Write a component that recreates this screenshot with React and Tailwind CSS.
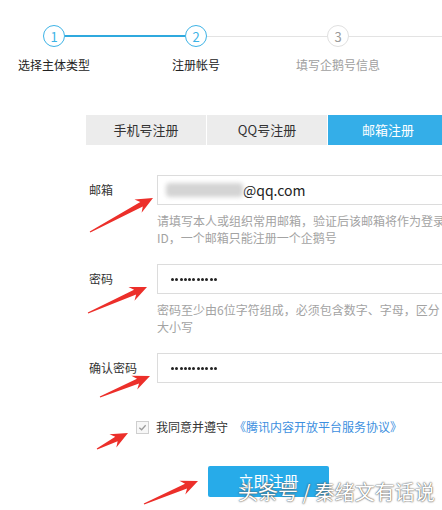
import React from "react";

const font = { fontFamily: '"Noto Sans CJK SC", "Noto Sans", sans-serif' };

const steps = [
  { n: 1, label: "选择主体类型", state: "done" },
  { n: 2, label: "注册帐号", state: "active" },
  { n: 3, label: "填写企鹅号信息", state: "todo" },
  { n: 4, label: "提交资料审核", state: "todo" },
];

// red arrows drawn over the screenshot
const arrows = [
  [90, 232, 153, 198],
  [88, 313, 147, 287],
  [100, 397, 150, 376],
  [97, 449, 128, 433],
  [144, 504, 198, 481],
];

function arrowPoints([x1, y1, x2, y2]) {
  const dx = x2 - x1;
  const dy = y2 - y1;
  const len = Math.hypot(dx, dy);
  const ux = dx / len;
  const uy = dy / len;
  const nx = -uy;
  const ny = ux;
  const head = 17;
  const bx = x2 - ux * head;
  const by = y2 - uy * head;
  const nk = x2 - ux * (head - 4);
  const nky = y2 - uy * (head - 4);
  const p = [
    [x1 + nx * 0.6, y1 + ny * 0.6],
    [nk + nx * 2.6, nky + ny * 2.6],
    [bx + nx * 7.5, by + ny * 7.5],
    [x2, y2],
    [bx - nx * 7.5, by - ny * 7.5],
    [nk - nx * 2.6, nky - ny * 2.6],
    [x1 - nx * 0.6, y1 - ny * 0.6],
  ];
  return p.map((q) => q.join(",")).join(" ");
}

function Step({ step, index }) {
  const leftLine =
    index === 0 ? "bg-transparent h-px" : index <= 1 ? "bg-[#2fa9de] h-[2px]" : "bg-[#e3e3e3] h-px";
  const rightLine = index === 0 ? "bg-[#2fa9de] h-[2px]" : "bg-[#e3e3e3] h-px";
  const ring =
    step.state === "todo"
      ? "border-[#e0e0e0] text-[#9a9a9a]"
      : "border-[#3db3e6] text-[#3db3e6]";
  return (
    <div className="w-[142px] shrink-0 flex flex-col items-center">
      <div className="w-full flex items-center h-[22px]">
        <div className={`flex-1 ${leftLine}`} />
        <div
          className={`w-[22px] h-[22px] rounded-full border ${ring} flex items-center justify-center text-[13px] leading-none`}
        >
          {step.n}
        </div>
        <div className={`flex-1 ${rightLine}`} />
      </div>
      <div
        className={`mt-[10px] text-[12px] leading-[16px] whitespace-nowrap ${
          step.state === "todo" ? "text-[#a0a0a0]" : "text-[#222]"
        }`}
      >
        {step.label}
      </div>
    </div>
  );
}

function Field({ label, children, help }) {
  return (
    <div className="flex">
      <div className="w-[68px] shrink-0 h-[30px] flex items-center text-[12px] text-[#333]">
        {label}
      </div>
      <div className="flex flex-col">
        <div className="w-[320px] h-[30px] border border-[#dcdcdc] bg-white flex items-center pl-[8px]">
          {children}
        </div>
        {help ? (
          <div className="mt-[7px] text-[12px] leading-[17px] text-[#a3a3a3] whitespace-nowrap">
            {help.map((l) => (
              <div key={l}>{l}</div>
            ))}
          </div>
        ) : null}
      </div>
    </div>
  );
}

const Dots = () => (
  <div className="flex gap-[1.3px] ml-[5px]">
    {Array.from({ length: 11 }).map((_, i) => (
      <div key={i} className="w-[3px] h-[3px] rounded-full bg-[#222]" />
    ))}
  </div>
);

export default function App() {
  return (
    <div className="relative w-[442px] h-[510px] overflow-hidden bg-white" style={font}>
      <div className="flex pt-[25px] ml-[-17px]">
        {steps.map((s, i) => (
          <Step key={s.n} step={s} index={i} />
        ))}
      </div>

      <div className="flex mt-[42px] ml-[86px] h-[30px] text-[13px]">
        <div className="w-[120px] shrink-0 bg-[#ececec] text-[#333] flex items-center justify-center">
          手机号注册
        </div>
        <div className="w-[120px] shrink-0 ml-px bg-[#ececec] text-[#333] flex items-center justify-center">
          QQ号注册
        </div>
        <div className="w-[120px] shrink-0 ml-px bg-[#34aee8] text-white flex items-center justify-center">
          邮箱注册
        </div>
      </div>

      <div className="ml-[89px] mt-[30px] flex flex-col">
        <Field
          label="邮箱"
          help={["请填写本人或组织常用邮箱，验证后该邮箱将作为登录", "ID，一个邮箱只能注册一个企鹅号"]}
        >
          <div className="w-[77px] h-[14px] bg-[#d4d4d4] blur-[2px] rounded-sm" />
          <span className="text-[14px] text-[#222]">@qq.com</span>
        </Field>
        <div className="h-[18px]" />
        <Field
          label="密码"
          help={["密码至少由6位字符组成，必须包含数字、字母，区分", "大小写"]}
        >
          <Dots />
        </Field>
        <div className="h-[18px]" />
        <Field label="确认密码">
          <Dots />
        </Field>

        <div className="flex items-center ml-[47px] mt-[35px] text-[12px]">
          <div className="w-[13px] h-[13px] border border-[#cfcfcf] bg-[#f7f7f7] flex items-center justify-center">
            <svg width="9" height="9" viewBox="0 0 10 10">
              <path d="M1.5 5.2 L4 7.5 L8.5 2.5" fill="none" stroke="#9a9a9a" strokeWidth="1.4" />
            </svg>
          </div>
          <span className="ml-[7px] text-[#333]">我同意并遵守</span>
          <span className="ml-[6px] text-[#3c8fe0]">《腾讯内容开放平台服务协议》</span>
        </div>

        <div className="ml-[119px] mt-[30px] w-[121px] h-[31px] rounded-[2px] bg-[#27abe9] flex items-center justify-center text-[15px] text-white">
          立即注册
        </div>
      </div>

      <div
        className="absolute left-[238px] top-[478px] text-[20px] leading-[28px] text-white whitespace-nowrap"
        style={{ textShadow: "0 0 2px #555, 0 0 1px #555" }}
      >
        头条号 / 秦绪文有话说
      </div>

      <svg className="absolute inset-0 pointer-events-none" width="442" height="510">
        {arrows.map((a, i) => (
          <polygon key={i} points={arrowPoints(a)} fill="#ec2f2a" />
        ))}
      </svg>
    </div>
  );
}
